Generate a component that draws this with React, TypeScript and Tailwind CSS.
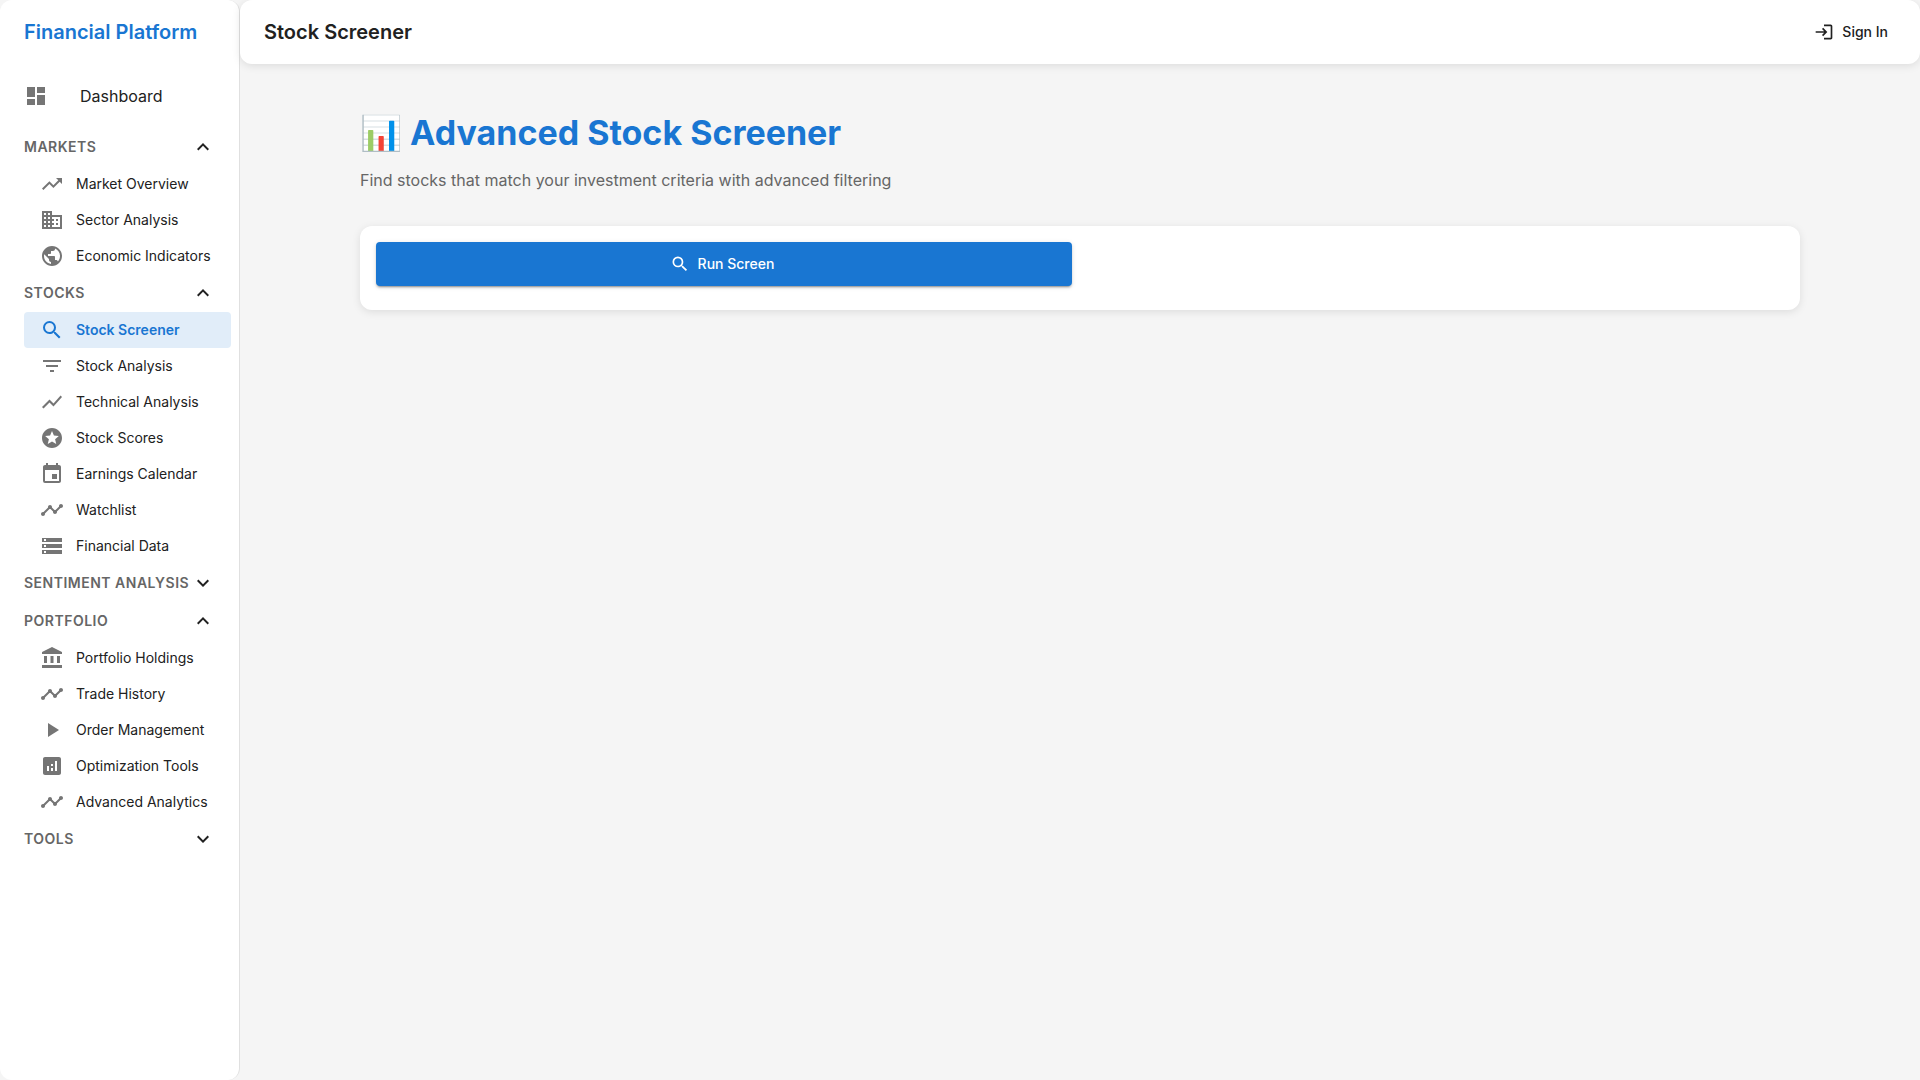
import { useState } from "react";
import type { IconType } from "react-icons";
import {
  MdAccountBalance,
  MdAnalytics,
  MdBusiness,
  MdDashboard,
  MdEvent,
  MdExpandLess,
  MdExpandMore,
  MdFilterList,
  MdLogin,
  MdPlayArrow,
  MdPublic,
  MdSearch,
  MdShowChart,
  MdStars,
  MdStorage,
  MdTimeline,
  MdTrendingUp,
} from "react-icons/md";

type Item = { label: string; icon: IconType };
type Section = { title: string; open: boolean; items: Item[] };

const sections: Section[] = [
  {
    title: "Markets",
    open: true,
    items: [
      { label: "Market Overview", icon: MdTrendingUp },
      { label: "Sector Analysis", icon: MdBusiness },
      { label: "Economic Indicators", icon: MdPublic },
    ],
  },
  {
    title: "Stocks",
    open: true,
    items: [
      { label: "Stock Screener", icon: MdSearch },
      { label: "Stock Analysis", icon: MdFilterList },
      { label: "Technical Analysis", icon: MdShowChart },
      { label: "Stock Scores", icon: MdStars },
      { label: "Earnings Calendar", icon: MdEvent },
      { label: "Watchlist", icon: MdTimeline },
      { label: "Financial Data", icon: MdStorage },
    ],
  },
  { title: "Sentiment Analysis", open: false, items: [] },
  {
    title: "Portfolio",
    open: true,
    items: [
      { label: "Portfolio Holdings", icon: MdAccountBalance },
      { label: "Trade History", icon: MdTimeline },
      { label: "Order Management", icon: MdPlayArrow },
      { label: "Optimization Tools", icon: MdAnalytics },
      { label: "Advanced Analytics", icon: MdTimeline },
    ],
  },
  { title: "Tools", open: false, items: [] },
];

function NavItem({ item, active }: { item: Item; active: boolean }) {
  const Icon = item.icon;
  return (
    <li>
      <a
        href="#"
        aria-current={active ? "page" : undefined}
        className={
          active
            ? "flex h-9 items-center gap-3 rounded bg-[#e1edf9] px-4 text-sm font-semibold text-[#1976d2]"
            : "flex h-9 items-center gap-3 rounded px-4 text-sm text-[#212121]"
        }
      >
        <Icon className={active ? "size-6 shrink-0" : "size-6 shrink-0 text-[#757575]"} />
        <span className="whitespace-nowrap">{item.label}</span>
      </a>
    </li>
  );
}

function NavSection({ section }: { section: Section }) {
  const [open, setOpen] = useState(section.open);
  const Chevron = open ? MdExpandLess : MdExpandMore;
  return (
    <section>
      <button
        type="button"
        aria-expanded={open}
        onClick={() => setOpen(!open)}
        className="flex h-[38px] w-full items-center justify-between pr-6 pl-6 text-[#212121]"
      >
        <span className="text-sm font-semibold tracking-[0.5px] whitespace-nowrap text-[#666666] uppercase">
          {section.title}
        </span>
        <Chevron className="size-6 shrink-0" />
      </button>
      {open && (
        <ul className="pr-2 pl-6">
          {section.items.map((item) => (
            <NavItem key={item.label} item={item} active={item.label === "Stock Screener"} />
          ))}
        </ul>
      )}
    </section>
  );
}

function Sidebar() {
  return (
    <nav className="w-60 shrink-0 rounded-xl border-r border-[#e0e0e0] bg-white">
      <div className="flex h-16 items-center px-6 text-xl font-semibold whitespace-nowrap text-[#1976d2]">
        Financial Platform
      </div>
      <a href="#" className="my-2 flex h-12 items-center gap-8 px-6 text-base text-[#212121]">
        <MdDashboard className="size-6 text-[#757575]" />
        Dashboard
      </a>
      {sections.map((section) => (
        <NavSection key={section.title} section={section} />
      ))}
    </nav>
  );
}

export default function App() {
  return (
    <div className="flex min-h-screen bg-[#f5f5f5] font-['Inter','Roboto',sans-serif] text-[#212121]">
      <Sidebar />
      <div className="flex min-w-0 flex-1 flex-col">
        <header className="flex h-16 items-center justify-between rounded-xl bg-white px-6 shadow-[0_2px_8px_rgba(0,0,0,0.1)]">
          <div className="text-xl font-semibold">Stock Screener</div>
          <button type="button" className="flex items-center gap-2 px-2 py-1.5 text-sm font-medium">
            <MdLogin className="size-5" />
            Sign In
          </button>
        </header>
        <main className="px-6 py-10">
          <div className="mx-auto max-w-[1440px]">
            <h1 className="text-[34px] leading-[58px] font-bold text-[#1976d2]">
              📊 Advanced Stock Screener
            </h1>
            <p className="mt-1 text-base leading-7 text-[#666666]">
              Find stocks that match your investment criteria with advanced filtering
            </p>
            <div className="mt-8 grid grid-cols-2 gap-4 rounded-xl bg-white px-4 pt-4 pb-6 shadow-[0_2px_8px_rgba(0,0,0,0.1)]">
              <button
                type="button"
                className="flex h-11 items-center justify-center gap-2 rounded bg-[#1976d2] text-sm font-medium text-white shadow-[0_3px_1px_-2px_rgba(0,0,0,0.2),0_2px_2px_0_rgba(0,0,0,0.14),0_1px_5px_0_rgba(0,0,0,0.12)]"
              >
                <MdSearch className="-ml-1 size-5" />
                Run Screen
              </button>
            </div>
          </div>
        </main>
      </div>
    </div>
  );
}
